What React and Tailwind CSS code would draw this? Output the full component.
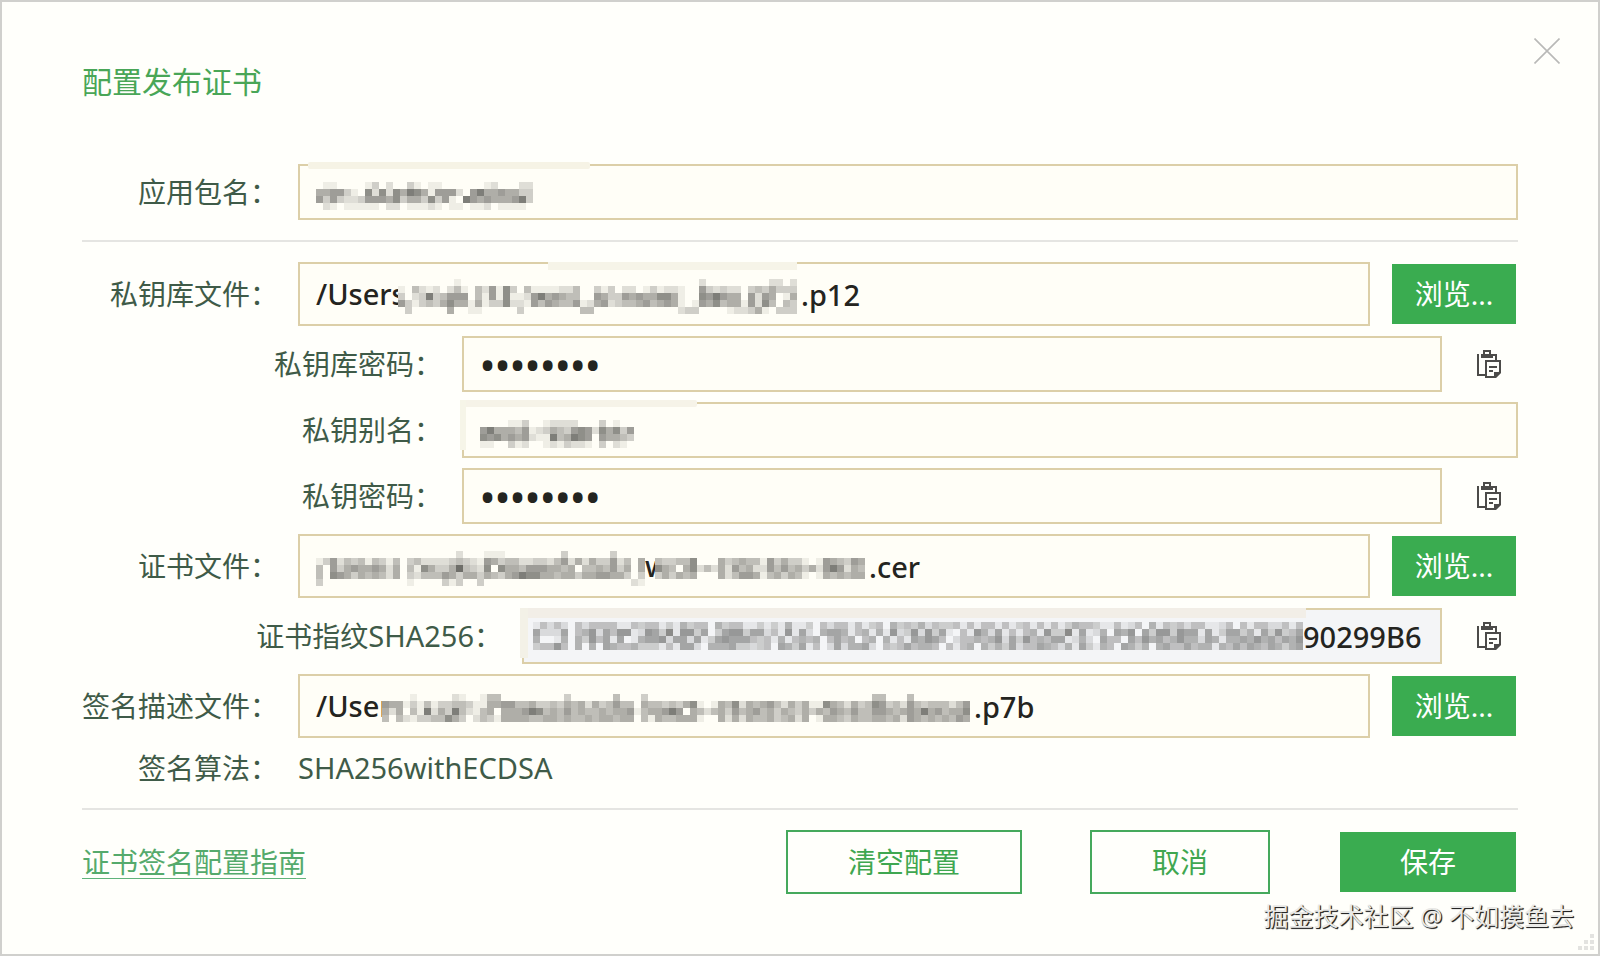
import React from "react";

const CELL = 7;

const MASKS = {
  bundle: [
    "0110000130200310110000001200022",
    "5566310727275875166620685565533",
    "6363223666573553736108656555683",
    "0210111110220111210110112011110",
  ],
  store: [
    "000000001000000000000000000000000000000000020000000002202",
    "104212024104261730411112240031302201312210063232203435333",
    "302383466604161711268565440065336565577510076865506265015",
    "631343575515133722164654461256234456456510165745516274043",
    "030000050011000003000000004400000000000023300001223510333",
  ],
  alias: [
    "0000113001222200030100",
    "6855546123543676275736",
    "7675656211845876065543",
    "1100312001213221030210",
  ],
  certA: [
    "00000000000000000000200011100000000300000030000",
    "13624341431403422223432165344223324625253362405",
    "40635655652504175335943270755466655450445463505",
    "40765354542503244465355354356877554553556655303",
    "30000000000001000031300300000000000000000000021",
  ],
  certB: [
    "433447000534544163533101654365",
    "754057242526452264645352686254",
    "353545000524665145354101545455",
  ],
  fingerprint: [
    "14242042444411434413153440534411313151130424414134053435243341414414134141413544311412405143424411240414422414",
    "62226045726477127638177360367736624171620566514515172372736104175261414517338161250657063773766161366351637346",
    "50015053746160156672662613676664341514545046450450514165764024454572637454661252064406475645755265155657564657",
    "34474050506544533314166205556332340653614026255620434645540414505353624465425163154065350564464551546465465356",
  ],
  profile: [
    "000010000021001440000000003000000400030000000000000000000000000000000044000400000000",
    "655131413344311556644533435452534644054434357101547254564253511754253476342643444246",
    "525041825384214505556874546454454556145568605424536456453543535465464466545658564557",
    "404213344753024315555445545445455455041544555100525254453452501554354455452654545465",
  ],
};

function Mask({ rows, light, className = "" }) {
  const cols = Math.min(...rows.map((r) => r.length));
  const levels = light ? 15 : 13;
  return (
    <svg
      aria-hidden="true"
      className={`shrink-0 ${className}`}
      width={cols * CELL}
      height={rows.length * CELL}
      shapeRendering="crispEdges"
    >
      {rows.map((row, y) =>
        row
          .slice(0, cols)
          .split("")
          .map((d, x) =>
            d === "0" ? null : (
              <rect
                key={`${x}-${y}`}
                x={x * CELL}
                y={y * CELL}
                width={CELL}
                height={CELL}
                fill="#2e2e2a"
                fillOpacity={Number(d) / levels}
              />
            )
          )
      )}
    </svg>
  );
}

function Label({ htmlFor, nested, wide, children }) {
  const width = wide ? "w-[440px]" : nested ? "w-[380px]" : "w-[216px]";
  return (
    <label htmlFor={htmlFor} className={`${width} shrink-0 pr-5 text-right text-[28px] leading-10 whitespace-nowrap text-[#3f5b48]`}>
      {children}
    </label>
  );
}

function Field({ tall, muted, children }) {
  return (
    <div
      className={`relative flex min-w-0 flex-1 items-center border-2 border-[#dccfa8] text-[29px] leading-10 font-medium text-[#242420] ${
        tall ? "h-16" : "h-14"
      } ${muted ? "justify-end bg-[#f4f5f7] px-4" : "bg-[#fffef7] pl-4"}`}
    >
      {children}
    </div>
  );
}

const inputClass = "h-full min-w-0 flex-1 bg-transparent pl-1 outline-none";

function PasswordField({ id }) {
  return (
    <Field>
      <input id={id} type="password" defaultValue="password" className="h-full min-w-0 flex-1 bg-transparent text-[40px] outline-none" />
    </Field>
  );
}

function BrowseButton() {
  return (
    <button type="button" className="ml-5 h-16 w-32 shrink-0 border-2 border-transparent bg-[#3aac50] bg-clip-padding text-[28px] leading-10 text-white">
      浏览...
    </button>
  );
}

function PasteButton() {
  return (
    <button type="button" aria-label="粘贴" className="mr-0.5 ml-5 flex h-14 w-[54px] shrink-0 items-center justify-center text-[#4c4b49]">
      <svg width="24" height="28" viewBox="0 0 24 28" fill="none" stroke="currentColor" strokeWidth="2">
        <path d="M1 4V25H9" />
        <path d="M7 5V1H13V5" />
        <path d="M4 4H16V8H4Z" fill="currentColor" stroke="none" />
        <path d="M16 5H19V10" />
        <path d="M9 11H23V22L18 27H9Z" />
        <path d="M24 21V23L19 28H17V22H24Z" fill="currentColor" stroke="none" />
        <path d="M12 17H20M12 21H16" />
      </svg>
    </button>
  );
}

export default function App() {
  return (
    <div className="relative min-h-screen border-2 border-[#d0d0cd] bg-[#fffffb] px-20 pt-[60px] pb-[60px] font-['Noto_Sans','Noto_Sans_CJK_SC',sans-serif]">
      <h1 className="mb-[62px] text-[30px] leading-10 text-[#49a657]">配置发布证书</h1>
      <button type="button" aria-label="关闭" className="absolute top-9 right-[38px] text-[#b9b9b7]">
        <svg width="26" height="26" viewBox="0 0 26 26" stroke="currentColor" strokeWidth="1.6">
          <path d="M.5.5l25 25M25.5.5l-25 25" />
        </svg>
      </button>

      <form onSubmit={(e) => e.preventDefault()}>
        <div className="flex items-center">
          <Label htmlFor="bundle">应用包名：</Label>
          <Field>
            <span className="absolute -top-1 left-2 h-[7px] w-[282px] rounded-xs bg-[#f6f3e5]" />
            <Mask rows={MASKS.bundle} className="mt-2" />
            <input id="bundle" className={inputClass} />
          </Field>
        </div>

        <hr className="my-5 border-t-2 border-[#e5e5e2]" />

        <div className="flex flex-col gap-2.5">
          <div className="flex items-center">
            <Label htmlFor="store">私钥库文件：</Label>
            <Field tall>
              <span className="absolute -top-0.5 left-[248px] h-2 w-[249px] bg-[#f6f4e8]" />
              <span className="w-[82px] shrink-0">/Users</span>
              <Mask rows={MASKS.store} className="mt-1 bg-[#fffef7]" />
              <input id="store" defaultValue=".p12" className={inputClass} />
            </Field>
            <BrowseButton />
          </div>

          <div className="flex items-center">
            <Label htmlFor="store-password" nested>私钥库密码：</Label>
            <PasswordField id="store-password" />
            <PasteButton />
          </div>

          <div className="flex items-center">
            <Label htmlFor="alias" nested>私钥别名：</Label>
            <Field>
              <span className="absolute -top-1 -left-1 h-[7px] w-[237px] rounded-xs bg-[#f6f3e8]" />
              <span className="absolute -top-1 -left-1 h-[50px] w-[6px] bg-[#f6f5e8]" />
              <Mask rows={MASKS.alias} className="mt-2" />
              <input id="alias" className={inputClass} />
            </Field>
          </div>

          <div className="flex items-center">
            <Label htmlFor="key-password" nested>私钥密码：</Label>
            <PasswordField id="key-password" />
            <PasteButton />
          </div>

          <div className="flex items-center">
            <Label htmlFor="cert">证书文件：</Label>
            <Field tall>
              <Mask rows={MASKS.certA} className="mt-1" />
              <span className="w-2.5 shrink-0">w</span>
              <Mask rows={MASKS.certB} className="mt-1 bg-[#fffef7]" />
              <input id="cert" defaultValue=".cer" className={inputClass} />
            </Field>
            <BrowseButton />
          </div>

          <div className="flex items-center">
            <Label htmlFor="fingerprint" wide>
              证书指纹<span className="text-[29px]">SHA256</span>：
            </Label>
            <Field muted>
              <span className="absolute -top-0.5 -left-1 h-2.5 w-[786px] bg-[#f2eee7]" />
              <span className="absolute -top-0.5 -left-1 h-[50px] w-2 bg-[#f3f1e7]" />
              <Mask rows={MASKS.fingerprint} light className="bg-[#f4f5f7]" />
              <input id="fingerprint" readOnly defaultValue="90299B6" className="h-full w-[121px] shrink-0 bg-transparent outline-none" />
            </Field>
            <PasteButton />
          </div>

          <div className="flex items-center">
            <Label htmlFor="profile">签名描述文件：</Label>
            <Field tall>
              <span className="w-[66px] shrink-0">/User</span>
              <Mask rows={MASKS.profile} className="mt-1 bg-[#fffef7]" />
              <input id="profile" defaultValue=".p7b" className={inputClass} />
            </Field>
            <BrowseButton />
          </div>

          <div className="flex items-center">
            <Label htmlFor="algorithm">签名算法：</Label>
            <output id="algorithm" className="text-[29px] leading-10 text-[#3f5b48]">SHA256withECDSA</output>
          </div>
        </div>

        <hr className="my-5 border-t-2 border-[#e5e5e2]" />

        <div className="flex items-center">
          <a href="#guide" className="mr-auto border-b border-[#5fb37a] text-[28px] leading-8 text-[#55aa6c]">
            证书签名配置指南
          </a>
          <div className="flex gap-[68px] text-[28px] leading-10">
            <button type="button" className="h-16 w-[236px] border-2 border-[#45a95c] text-[#3fa750]">清空配置</button>
            <button type="button" className="h-16 w-[180px] border-2 border-[#45a95c] text-[#3fa750]">取消</button>
            <button type="submit" className="h-16 w-[180px] border-2 border-transparent bg-[#3aac50] bg-clip-padding text-white">保存</button>
          </div>
        </div>
      </form>

      <div className="absolute right-6 bottom-[22px] text-[25px] leading-8 whitespace-nowrap text-[#e9e9e7] [text-shadow:1px_1px_1px_#222,1px_1px_0_#444]">
        掘金技术社区 @ 不如摸鱼去
      </div>
      <svg aria-hidden="true" className="absolute right-1 bottom-1 text-[#e3e3e0]" width="16" height="16" fill="currentColor">
        <path d="M12 0h4v4h-4zM6 6h4v4H6zM12 6h4v4h-4zM0 12h4v4H0zM6 12h4v4H6zM12 12h4v4h-4z" />
      </svg>
    </div>
  );
}
